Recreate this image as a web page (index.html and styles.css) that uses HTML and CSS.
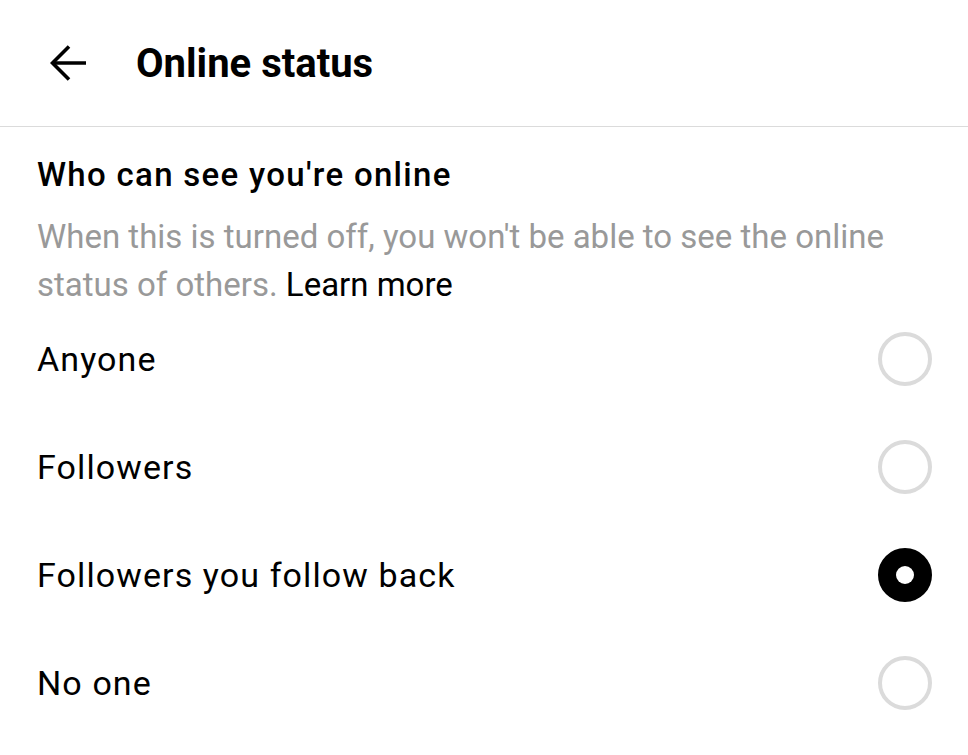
FILE: index.html
```html
<!DOCTYPE html>
<html lang="en">
  <head>
    <meta charset="UTF-8">
    <meta name="viewport" content="width=device-width, initial-scale=1.0">
    <title>Online status</title>
    <link rel="stylesheet" href="styles.css">
  </head>
  <body>
    <header class="topbar">
      <button class="back" aria-label="Back">
        <svg width="36" height="36" viewBox="0 0 36 36" fill="none" stroke="#000" stroke-width="3.6">
          <path d="M2 18H36" />
          <path d="M19 1.5L2.5 18L19 34.5" />
        </svg>
      </button>
      <h1 class="title">Online status</h1>
    </header>

    <main class="content">
      <h2 class="heading">Who can see you're online</h2>
      <p class="desc">When this is turned off, you won't be able to see the online status of others. <span class="learn">Learn more</span></p>

      <ul class="options">
        <li class="option">
          <span>Anyone</span>
          <span class="radio"></span>
        </li>
        <li class="option">
          <span>Followers</span>
          <span class="radio"></span>
        </li>
        <li class="option">
          <span>Followers you follow back</span>
          <span class="radio checked"></span>
        </li>
        <li class="option">
          <span>No one</span>
          <span class="radio"></span>
        </li>
      </ul>
    </main>
  </body>
</html>
```

FILE: styles.css
```css
body {
  margin: 0;
  font-family: Roboto, "Liberation Sans", Arial, sans-serif;
  background-color: #fff;
  color: #000;
}
.topbar {
  display: flex;
  align-items: center;
  height: 126px;
  padding-left: 50px;
  border-bottom: 1px solid #dbdbdb;
}
.back {
  display: flex;
  padding: 0;
  border: none;
  background: none;
  margin-right: 50px;
  cursor: pointer;
}
.title {
  margin: 0;
  font-size: 40px;
  font-weight: 700;
}
.content {
  padding: 28px 36px 0 37px;
}
.heading {
  margin: 0 0 18px;
  font-size: 33px;
  font-weight: 500;
  line-height: 40px;
  letter-spacing: 1.3px;
}
.desc {
  margin: 0 0 -4px;
  font-size: 33px;
  line-height: 48px;
  color: #999;
}
.learn {
  color: #000;
  cursor: pointer;
}
.options {
  list-style: none;
  margin: 0;
  padding: 0;
}
.option {
  display: flex;
  align-items: center;
  justify-content: space-between;
  height: 108px;
  font-size: 34px;
  letter-spacing: 1.1px;
}
.radio {
  box-sizing: border-box;
  width: 54px;
  height: 54px;
  border: 4px solid #dbdbdb;
  border-radius: 50%;
}
.radio.checked {
  display: flex;
  align-items: center;
  justify-content: center;
  border-color: #000;
  background-color: #000;
}
.radio.checked::after {
  content: "";
  width: 18px;
  height: 18px;
  border-radius: 50%;
  background-color: #fff;
}
```
